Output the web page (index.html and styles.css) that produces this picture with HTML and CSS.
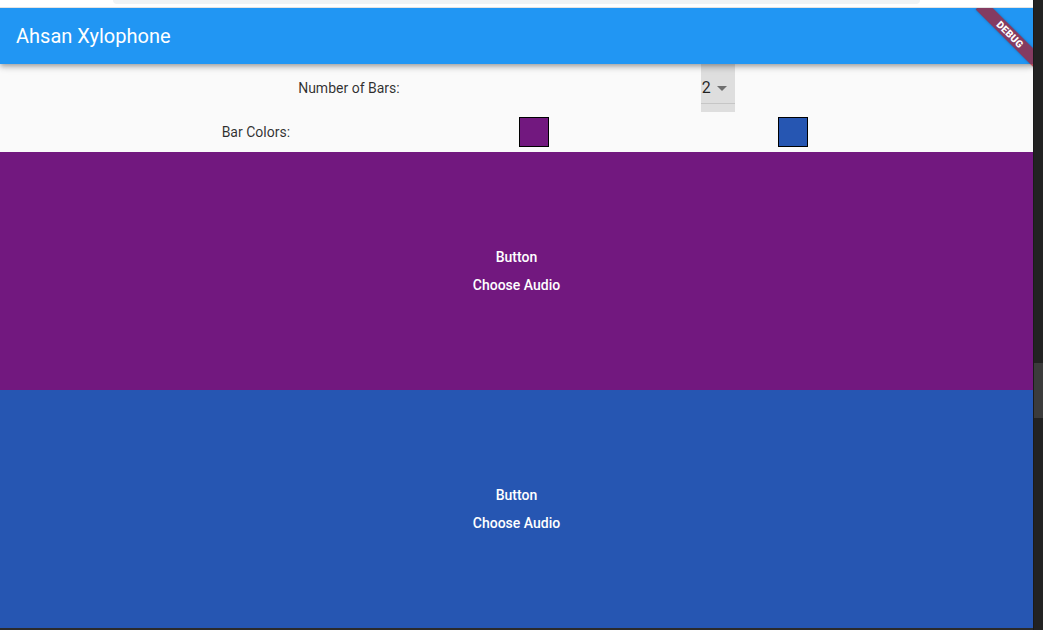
FILE: index.html
```html
<!DOCTYPE html>
<html>
<head>
<meta charset="utf-8">
<title>Ahsan Xylophone</title>
<link rel="stylesheet" href="styles.css">
</head>
<body>
<div class="screen">
  <div class="main">
    <div class="chrome"><div class="pill"></div></div>
    <div class="app">
      <header class="appbar"><span class="title">Ahsan Xylophone</span></header>
      <div class="banner"><span>DEBUG</span></div>
      <section class="controls">
        <div class="row row-count">
          <span class="label">Number of Bars:</span>
          <div class="dropdown">
            <span class="value">2</span>
            <span class="arrow"></span>
            <span class="underline"></span>
          </div>
        </div>
        <div class="row row-colors">
          <span class="label">Bar Colors:</span>
          <div class="swatch-wrap"><div class="swatch purple"></div></div>
          <div class="swatch-wrap"><div class="swatch blue"></div></div>
        </div>
      </section>
      <section class="bars">
        <div class="bar purple">
          <span class="btn">Button</span>
          <span class="btn">Choose Audio</span>
        </div>
        <div class="bar blue">
          <span class="btn">Button</span>
          <span class="btn">Choose Audio</span>
        </div>
      </section>
    </div>
    <div class="bottomline"></div>
  </div>
  <div class="scrollbar"><div class="thumb"></div></div>
</div>
</body>
</html>
```
FILE: styles.css
```css
html, body {
  margin: 0;
  padding: 0;
  background: #2a2a2a;
}
body {
  font-family: Roboto, "Liberation Sans", sans-serif;
}
.screen {
  display: flex;
  width: 1043px;
  height: 630px;
  overflow: hidden;
}
.main {
  width: 1034px;
  display: flex;
  flex-direction: column;
}
.chrome {
  height: 7px;
  background: #ffffff;
  border-bottom: 1px solid #e3e3e3;
  display: flex;
}
.pill {
  margin-left: 113px;
  width: 807px;
  height: 4px;
  background: #f1f3f4;
  border-radius: 0 0 6px 6px;
}
.app {
  flex: 1;
  display: flex;
  flex-direction: column;
  position: relative;
  overflow: hidden;
  background: #fafafa;
}
.appbar {
  height: 56px;
  flex: none;
  background: #2196f3;
  display: flex;
  align-items: center;
  padding-left: 16px;
  box-shadow: 0 2px 4px -1px rgba(0,0,0,0.2), 0 4px 5px 0 rgba(0,0,0,0.14), 0 1px 10px 0 rgba(0,0,0,0.12);
  position: relative;
  z-index: 2;
}
.title {
  color: #ffffff;
  font-size: 20px;
  font-weight: 400;
  letter-spacing: 0;
}
.banner {
  position: absolute;
  z-index: 5;
  left: 968px;
  top: 20px;
  width: 84px;
  height: 13px;
  background: rgba(170, 24, 40, 0.72);
  transform: rotate(45deg);
  display: flex;
  align-items: center;
  justify-content: center;
  box-shadow: 0 0 3px rgba(0,0,0,0.25);
}
.banner span {
  color: #ffffff;
  font-size: 10px;
  font-weight: 900;
  letter-spacing: 0.3px;
  line-height: 13px;
}
.controls {
  flex: none;
  display: flex;
  flex-direction: column;
}
.row {
  display: flex;
  align-items: center;
  justify-content: space-evenly;
}
.row-count {
  height: 48px;
}
.row-colors {
  height: 40px;
}
.label {
  font-size: 14px;
  color: rgba(0,0,0,0.82);
}
.dropdown {
  position: relative;
  width: 34px;
  height: 48px;
  background: #dedede;
  margin-left: 3px;
}
.dropdown .value {
  position: absolute;
  left: 1px;
  top: 14px;
  font-size: 16px;
  line-height: 20px;
  color: rgba(0,0,0,0.85);
}
.dropdown .arrow {
  position: absolute;
  left: 16px;
  top: 22px;
  width: 0;
  height: 0;
  border-left: 5px solid transparent;
  border-right: 5px solid transparent;
  border-top: 5px solid #6f6f6f;
}
.dropdown .underline {
  position: absolute;
  left: 0;
  right: 0;
  top: 39px;
  height: 1px;
  background: #c6c6c6;
}
.swatch-wrap {
  width: 37px;
  display: flex;
  justify-content: center;
}
.row-colors .label {
  margin-right: 4px;
}
.swatch {
  width: 28px;
  height: 28px;
  border: 1px solid #000000;
}
.purple {
  background: #72187f;
}
.blue {
  background: #2656b2;
}
.bars {
  flex: 1;
  display: flex;
  flex-direction: column;
}
.bar {
  flex: 1;
  display: flex;
  flex-direction: column;
  align-items: center;
  justify-content: center;
}
.btn {
  height: 28px;
  line-height: 28px;
  font-size: 14px;
  font-weight: 500;
  color: #ffffff;
}
.bottomline {
  height: 2px;
  background: #2b2b2b;
}
.scrollbar {
  width: 9px;
  background: #222222;
  border-left: 1px solid #1a1a1a;
  display: flex;
  flex-direction: column;
  padding-top: 363px;
}
.thumb {
  height: 55px;
  background: #3b3b3b;
}
```
